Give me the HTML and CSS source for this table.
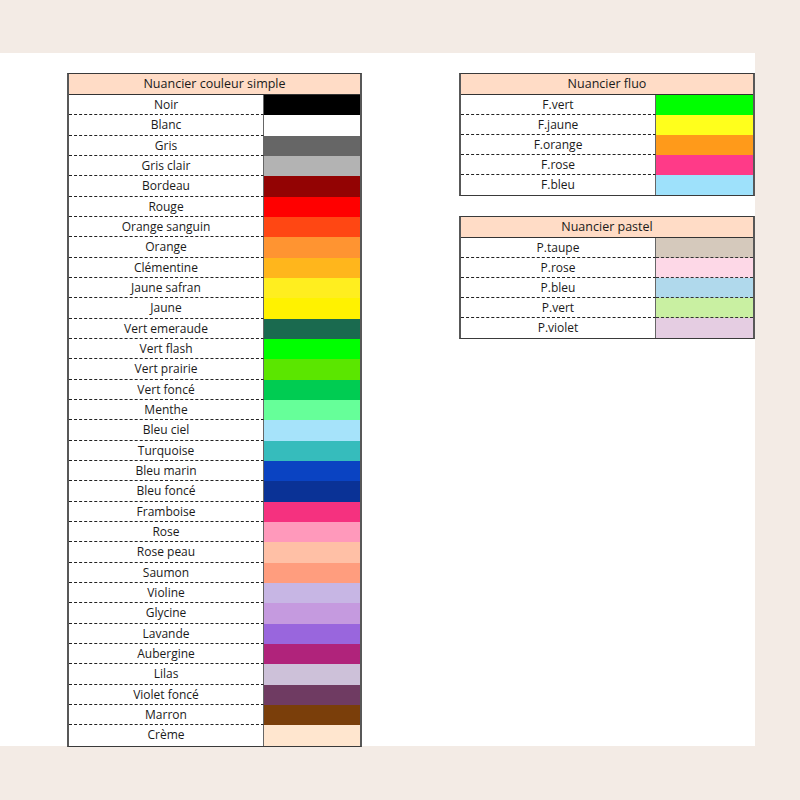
FILE: index.html
```html
<!DOCTYPE html>
<html lang="fr">
<head>
<meta charset="utf-8">
<title>Nuancier</title>
<link rel="stylesheet" href="styles.css">
</head>
<body>
<div class="panel">
  <div class="table table-main">
    <div class="head">Nuancier couleur simple</div>
    <div class="row"><div class="label">Noir</div><div class="swatch" style="background:#000000"></div></div>
    <div class="row"><div class="label">Blanc</div><div class="swatch" style="background:#ffffff"></div></div>
    <div class="row"><div class="label">Gris</div><div class="swatch" style="background:#666666"></div></div>
    <div class="row"><div class="label">Gris clair</div><div class="swatch" style="background:#b3b3b3"></div></div>
    <div class="row"><div class="label">Bordeau</div><div class="swatch" style="background:#930303"></div></div>
    <div class="row"><div class="label">Rouge</div><div class="swatch" style="background:#ff0000"></div></div>
    <div class="row"><div class="label">Orange sanguin</div><div class="swatch" style="background:#ff4713"></div></div>
    <div class="row"><div class="label">Orange</div><div class="swatch" style="background:#ff9431"></div></div>
    <div class="row"><div class="label">Clémentine</div><div class="swatch" style="background:#ffb61c"></div></div>
    <div class="row"><div class="label">Jaune safran</div><div class="swatch" style="background:#ffee1f"></div></div>
    <div class="row"><div class="label">Jaune</div><div class="swatch" style="background:#fff200"></div></div>
    <div class="row"><div class="label">Vert emeraude</div><div class="swatch" style="background:#1a6a4f"></div></div>
    <div class="row"><div class="label">Vert flash</div><div class="swatch" style="background:#00ff00"></div></div>
    <div class="row"><div class="label">Vert prairie</div><div class="swatch" style="background:#5be600"></div></div>
    <div class="row"><div class="label">Vert foncé</div><div class="swatch" style="background:#00cc52"></div></div>
    <div class="row"><div class="label">Menthe</div><div class="swatch" style="background:#66ff99"></div></div>
    <div class="row"><div class="label">Bleu ciel</div><div class="swatch" style="background:#a6e3fa"></div></div>
    <div class="row"><div class="label">Turquoise</div><div class="swatch" style="background:#36bcbc"></div></div>
    <div class="row"><div class="label">Bleu marin</div><div class="swatch" style="background:#0a43c2"></div></div>
    <div class="row"><div class="label">Bleu foncé</div><div class="swatch" style="background:#0a3296"></div></div>
    <div class="row"><div class="label">Framboise</div><div class="swatch" style="background:#f5317f"></div></div>
    <div class="row"><div class="label">Rose</div><div class="swatch" style="background:#ff99bb"></div></div>
    <div class="row"><div class="label">Rose peau</div><div class="swatch" style="background:#ffc0a6"></div></div>
    <div class="row"><div class="label">Saumon</div><div class="swatch" style="background:#ff9d7e"></div></div>
    <div class="row"><div class="label">Violine</div><div class="swatch" style="background:#c7b6e4"></div></div>
    <div class="row"><div class="label">Glycine</div><div class="swatch" style="background:#c59adf"></div></div>
    <div class="row"><div class="label">Lavande</div><div class="swatch" style="background:#9966dd"></div></div>
    <div class="row"><div class="label">Aubergine</div><div class="swatch" style="background:#b0237b"></div></div>
    <div class="row"><div class="label">Lilas</div><div class="swatch" style="background:#cdc1d9"></div></div>
    <div class="row"><div class="label">Violet foncé</div><div class="swatch" style="background:#6f3b62"></div></div>
    <div class="row"><div class="label">Marron</div><div class="swatch" style="background:#7a3e0a"></div></div>
    <div class="row"><div class="label">Crème</div><div class="swatch" style="background:#ffe6cf"></div></div>
  </div>
  <div class="side">
    <div class="table">
      <div class="head">Nuancier fluo</div>
      <div class="row"><div class="label">F.vert</div><div class="swatch" style="background:#00ff00"></div></div>
      <div class="row"><div class="label">F.jaune</div><div class="swatch" style="background:#ffff1c"></div></div>
      <div class="row"><div class="label">F.orange</div><div class="swatch" style="background:#ff9a1a"></div></div>
      <div class="row"><div class="label">F.rose</div><div class="swatch" style="background:#ff3a88"></div></div>
      <div class="row"><div class="label">F.bleu</div><div class="swatch" style="background:#9ee1fb"></div></div>
    </div>
    <div class="table pastel">
      <div class="head">Nuancier pastel</div>
      <div class="row"><div class="label">P.taupe</div><div class="swatch" style="background:#d5c9bc"></div></div>
      <div class="row"><div class="label">P.rose</div><div class="swatch" style="background:#fdd8e7"></div></div>
      <div class="row"><div class="label">P.bleu</div><div class="swatch" style="background:#b0d9ec"></div></div>
      <div class="row"><div class="label">P.vert</div><div class="swatch" style="background:#c9f0a2"></div></div>
      <div class="row"><div class="label">P.violet</div><div class="swatch" style="background:#e5cde2"></div></div>
    </div>
  </div>
</div>
</body>
</html>
```

FILE: styles.css
```css
* { box-sizing: border-box; }
html, body { margin: 0; padding: 0; }
body {
  background: #f3ebe5;
  font-family: "Open Sans", "Noto Sans", sans-serif;
  color: #1a1a1a;
  height: 800px;
}
.panel {
  margin-top: 53px;
  width: 755px;
  height: 693px;
  background: #ffffff;
  padding: 20px 0 0 67px;
  display: flex;
  align-items: flex-start;
  gap: 97px;
}
.table {
  width: 296px;
  border: 2px solid #585858;
  border-top: 1px solid #3a3a3a;
  border-bottom: 1px solid #3a3a3a;
  background: #fff;
}
.head {
  height: 21px;
  background: #ffdcc6;
  border-bottom: 1px solid #333;
  text-align: center;
  font-size: 12.5px;
  line-height: 20px;
}
.row {
  display: grid;
  grid-template-columns: 195px 1fr;
  height: 20.34px;
}
.label {
  text-align: center;
  font-size: 12px;
  line-height: 19px;
  border-bottom: 1px dashed #222;
  border-right: 1px solid #666;
}
.row:last-child .label { border-bottom: none; }
.pastel .row .swatch { border-bottom: 1px dashed #333; }
.pastel .row:last-child .swatch { border-bottom: none; }
.side {
  display: flex;
  flex-direction: column;
  gap: 20px;
}
.side .row { height: 20px; }
```
